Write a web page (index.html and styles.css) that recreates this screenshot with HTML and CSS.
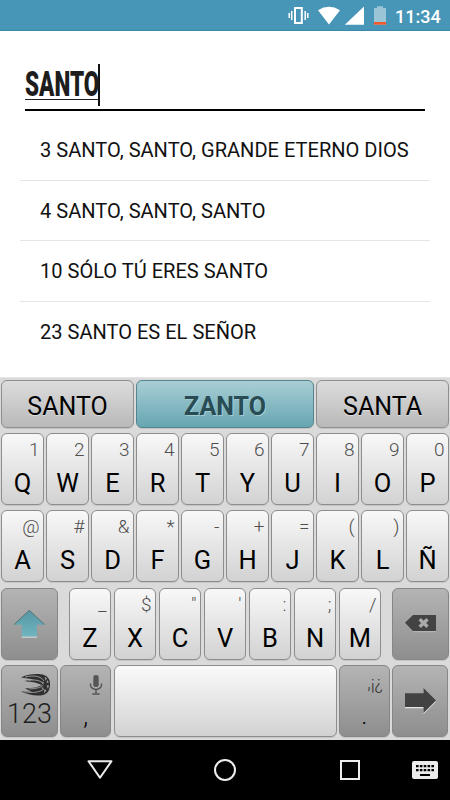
FILE: index.html
```html
<!DOCTYPE html>
<html lang="es">
<head>
<meta charset="utf-8">
<title>SANTO</title>
<link rel="stylesheet" href="styles.css">
</head>
<body>
<div class="phone">
  <header class="status">
    <svg class="status-icons" width="104" height="31" viewBox="0 0 104 31">
      <path d="M8 8h6.800v15H8z" fill="none" stroke="#fff" stroke-width="2"/>
      <path d="M4.700 11v9M18.200 11v9M2.200 13v5M20.800 13v5" stroke="#fff" stroke-width="1.500"/>
      <path d="M31 10.200Q42 3.500 53 10.200L42 24.500Z" fill="#fff"/>
      <path d="M57.800 24.800H77V6.500Z" fill="#fff"/>
      <path d="M87 8h3V6.300h6V8h3v17h-12z" fill="#9ac5d7"/>
      <path d="M87 22h12v2.700h-12z" fill="#f05a2c"/>
    </svg>
    <span class="clock">11:34</span>
  </header>
  <main>
    <div class="search"><span class="query"><span class="query-text">SANTO</span></span></div>
    <ul class="results">
      <li>3 SANTO, SANTO, GRANDE ETERNO DIOS</li>
      <li>4 SANTO, SANTO, SANTO</li>
      <li>10 SÓLO TÚ ERES SANTO</li>
      <li>23 SANTO ES EL SEÑOR</li>
    </ul>
  </main>
  <section class="keyboard">
    <div class="suggestions">
      <div class="suggestion">SANTO</div><div class="suggestion active">ZANTO</div><div class="suggestion">SANTA</div>
    </div>
    <div class="row ten">
      <div class="key"><small>1</small><b>Q</b></div><div class="key"><small>2</small><b>W</b></div><div class="key"><small>3</small><b>E</b></div><div class="key"><small>4</small><b>R</b></div><div class="key"><small>5</small><b>T</b></div><div class="key"><small>6</small><b>Y</b></div><div class="key"><small>7</small><b>U</b></div><div class="key"><small>8</small><b>I</b></div><div class="key"><small>9</small><b>O</b></div><div class="key"><small>0</small><b>P</b></div>
    </div>
    <div class="row ten home-row">
      <div class="key"><small>@</small><b>A</b></div><div class="key"><small>#</small><b>S</b></div><div class="key"><small>&amp;</small><b>D</b></div><div class="key"><small>*</small><b>F</b></div><div class="key"><small>-</small><b>G</b></div><div class="key"><small>+</small><b>H</b></div><div class="key"><small>=</small><b>J</b></div><div class="key"><small>(</small><b>K</b></div><div class="key"><small>)</small><b>L</b></div><div class="key"><small></small><b>Ñ</b></div>
    </div>
    <div class="row shift-row">
      <div class="key dark icon">
        <svg width="56" height="72" viewBox="0 0 56 72">
          <defs><linearGradient id="teal" x1="0" y1="0" x2="0" y2="1"><stop offset="0" stop-color="#5597a2"/><stop offset="1" stop-color="#71b5c0"/></linearGradient></defs>
          <path d="M20.800 49h15.200" stroke="#d2d9da" stroke-width="1.500"/>
          <path d="M28.300 22.500L43.500 36.800H36V48.500H20.800V36.800H13Z" fill="url(#teal)"/>
          <path d="M13 36.600L28.300 22.300L43.500 36.600" fill="none" stroke="#41636a" stroke-width=".8"/>
        </svg>
      </div>
      <div class="letters">
        <div class="key"><small>_</small><b>Z</b></div><div class="key"><small>$</small><b>X</b></div><div class="key"><small>"</small><b>C</b></div><div class="key"><small>'</small><b>V</b></div><div class="key"><small>:</small><b>B</b></div><div class="key"><small>;</small><b>N</b></div><div class="key"><small>/</small><b>M</b></div>
      </div>
      <div class="key dark icon">
        <svg width="56" height="72" viewBox="0 0 56 72">
          <path d="M21 43.700h22.800" stroke="#bbb" stroke-width="1"/>
          <path d="M13 34.800L21 27H44V43H21Z" fill="#434343"/>
          <path d="M27.700 31.300L35.500 38.700M35.500 31.300L27.700 38.700" stroke="#aaa" stroke-width="3.400"/>
        </svg>
      </div>
    </div>
    <div class="row bottom-row">
      <div class="key dark numeric">
        <svg class="swift" width="32" height="24" viewBox="0 0 32 24">
          <path d="M1 4.500C9 .5 19 .5 24 2C29 4 30.500 8 30 12.500C29.500 18 27 21 23 22C16 23.500 7 21.500 1 18.500L12 18.800L5 15.500L16 14.500L22 12L15 9.500L4 8L14 6.500Z" fill="#303030"/>
          <g fill="none" stroke="#a3a3a3" stroke-width=".9">
            <path d="M5 4C14 2 21 3 24 8"/>
            <path d="M9 7.500C16 6 21 8 23.500 11"/>
            <path d="M9 15.800C17 16 21 14 23.500 12"/>
            <path d="M4 18.700C14 20.500 20 19 24 16"/>
          </g>
          <g fill="#9d9d9d"><path d="M24.500 3.500l2.500 2-1.500 2zM27.500 7l1.300 3-2.500-.5zM26.500 12.500l2.500-.3-1 3.800zM24.500 16l2 1.500-2.700 2.800zM22 8.500l2 1-1.500 1.500zM21.500 14l2 1-1.500 1.500z"/></g>
        </svg>
        <span>123</span>
      </div>
      <div class="key dark comma">
        <svg class="mic" width="14" height="22" viewBox="0 0 14 22"><rect x="4.300" y="1" width="5.400" height="12" rx="2.500" fill="#565656"/><path d="M1.500 9.500V11a5.500 4.500 0 0 0 11 0V9.500M7 15.500V20M3.300 20h7.400" fill="none" stroke="#565656" stroke-width="1.500"/></svg>
        <b>,</b>
      </div>
      <div class="key space"></div>
      <div class="key dark period"><small>,¡¿</small><b>.</b></div>
      <div class="key dark icon">
        <svg width="56" height="72" viewBox="0 0 56 72"><path d="M13 29.500H31.500V24.200L44 36.500L31.500 49.200V43.200H13Z" fill="#e5e5e5"/><path d="M13 28.300H31.500V23L44 35.500L31.500 48V42H13Z" fill="#424242"/></svg>
      </div>
    </div>
  </section>
  <nav class="nav">
    <svg width="450" height="60" viewBox="0 0 450 60">
      <g fill="none" stroke="#ededed" stroke-width="2">
        <path d="M88.500 21.200H111.500L100 37.800Z" stroke-linejoin="round"/>
        <circle cx="225" cy="30" r="10"/>
        <rect x="341" y="21" width="18" height="18"/>
      </g>
      <rect x="412" y="21" width="26" height="18" rx="2" fill="#ededed"/>
      <path d="M416 26.200H434M416 30.200H434" stroke="#000" stroke-width="2.200" stroke-dasharray="2.600 1.250"/>
      <path d="M420 35h10" stroke="#000" stroke-width="2"/>
    </svg>
  </nav>
</div>
</body>
</html>
```
FILE: styles.css
```css
* { box-sizing: border-box; }
body { margin: 0; background: #fff; font-family: Roboto, "Liberation Sans", sans-serif; }
.phone { width: 450px; height: 800px; display: flex; flex-direction: column; overflow: hidden; }
.status { height: 31px; flex: none; background: #4896b7; border-bottom: 1px solid #3a88aa; display: flex; justify-content: flex-end; color: #fff; padding-right: 10px; }
.status-icons { display: block; margin-right: 4px; }
.clock { font-size: 18px; font-weight: 500; line-height: 33px; width: 45px; white-space: nowrap; }
main { height: 346px; flex: none; }
.search { margin: 33px 25px 0; height: 47px; border-bottom: 2px solid #000; display: flex; align-items: flex-start; }
.query { width: 75px; height: 42px; border-right: 2px solid #111; }
.query-text { display: block; width: 112px; height: 36px; line-height: 40px; font-size: 34.500px; font-weight: 900; color: #1d1d1d; white-space: nowrap; border-bottom: 1px solid #222; transform: scaleX(.652); transform-origin: 0 0; }
.results { list-style: none; margin: 9px 20px 0; padding: 0; }
.results li { height: 60.500px; line-height: 61px; padding-left: 20px; border-bottom: 1px solid #e5e5e5; font-size: 20.060px; color: #111; white-space: nowrap; }
.results li:last-child { border: 0; }
.keyboard { height: 363px; flex: none; background: #dadada; border-top: 1px solid #e5e5e5; padding: 2px 1px 0; }
.suggestions { display: grid; grid-template-columns: 133px 178px 133px; grid-template-rows: 48px; gap: 2px; height: 48px; margin-bottom: 5px; }
.suggestion { border: 1px solid #8f8f8f; border-radius: 6px; background: linear-gradient(#dcdcdc, #b9b9b9); font-size: 25px; line-height: 52px; text-align: center; color: #000; text-shadow: 0 1px #ddd; box-shadow: 0 1px #c2c2c2; }
.suggestion.active { background: linear-gradient(#a9ced5, #66a6b1); border-color: #54858e; color: #284b54; font-weight: 700; text-shadow: 1px 1px #a3cbd2; }
.row { height: 72px; margin-bottom: 5px; display: grid; }
.home-row { margin-bottom: 6px; }
.ten { grid-template-columns: repeat(10, 43px); gap: 2px; }
.key { height: 72px; border: 1px solid #8d8d8d; border-radius: 6px; background: linear-gradient(#f8f8f8, #d2d2d2); display: flex; flex-direction: column; box-shadow: 0 1px #c5c5c5; overflow: hidden; }
.key small { height: 20px; margin: 6px 4px 0 0; text-align: right; font-size: 19px; line-height: 20px; color: #7b7b7b; }
.key b { height: 30px; margin-top: 8px; font-size: 25.500px; line-height: 30px; font-weight: 400; text-align: center; color: #000; }
.dark { background: linear-gradient(#b4b4b4, #8e8e8e); border-color: #868686; }
.shift-row { grid-template-columns: 57px 312px 57px; gap: 11px; }
.letters { display: grid; grid-template-columns: repeat(7, 42px); gap: 3px; }
.icon svg { margin: -1px; flex: none; }
.bottom-row { grid-template-columns: 57px 51px 223px 51px 56px; gap: 2px; column-gap: 2.300px; }
.numeric { align-items: center; }
.swift { margin: 7px 0 0 12px; flex: none; }
.numeric span { font-size: 27px; line-height: 34px; font-weight: 300; color: #1f1f1f; }
.mic { margin: 8px 7px 0 auto; flex: none; }
.comma b { margin-top: 4px; font-weight: 300; }
.period small { color: #343434; font-size: 18px; margin: 7px 6px 0 0; font-weight: 300; }
.period b { margin-top: 7px; font-weight: 300; }
.ten small, .letters small { font-weight: 300; color: #4f4f4f; margin-right: 3.500px; }
.space { background: linear-gradient(#fafafa, #d2d2d2); }
.nav { height: 60px; flex: none; background: #000; }
.nav svg { display: block; }
```
